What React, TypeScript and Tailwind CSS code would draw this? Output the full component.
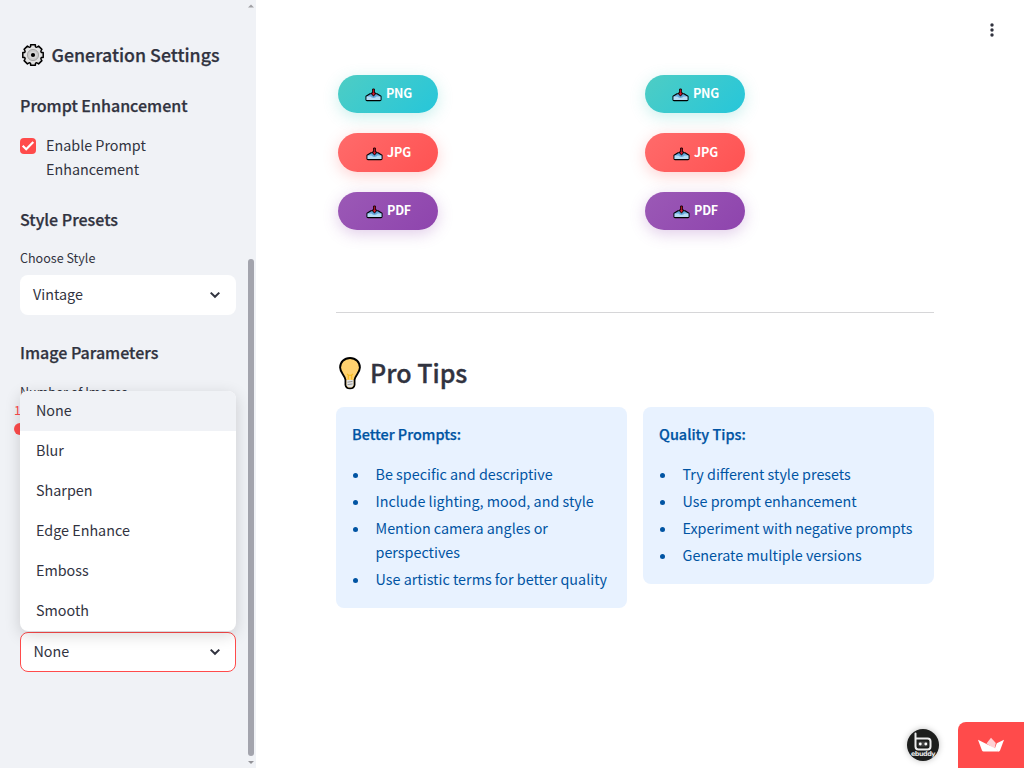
import React from "react";

const filters = ["None", "Blur", "Sharpen", "Edge Enhance", "Emboss", "Smooth"];

function Gear() {
  return (
    <svg width="24" height="24" viewBox="0 0 24 24" className="shrink-0">
      <path
        d="M9.6 1.8 H14.4 V3.6 Q15.2 4.6 16.4 3.9 L17.6 3.1 L20.9 6.4 L20.1 7.6 Q19.4 8.8 20.6 9.6 H22.2 V14.4 H20.6 Q19.4 15.2 20.1 16.4 L20.9 17.6 L17.6 20.9 L16.4 20.1 Q15.2 19.4 14.4 20.6 V22.2 H9.6 V20.6 Q8.8 19.4 7.6 20.1 L6.4 20.9 L3.1 17.6 L3.9 16.4 Q4.6 15.2 3.4 14.4 H1.8 V9.6 H3.4 Q4.6 8.8 3.9 7.6 L3.1 6.4 L6.4 3.1 L7.6 3.9 Q8.8 4.6 9.6 3.6 Z"
        fill="#e2e2e2"
        stroke="#000"
        strokeWidth="1.5"
        strokeLinejoin="round"
      />
      <circle cx="12" cy="12" r="5.6" fill="#c9c9c9" stroke="#9a9a9a" strokeWidth="0.8" />
      <circle cx="12" cy="12" r="3.6" fill="#d8d8d8" />
      <circle cx="12" cy="12" r="2.1" fill="#000" />
    </svg>
  );
}

function Bulb() {
  return (
    <svg width="24" height="34" viewBox="0 0 24 34" className="shrink-0">
      <path
        d="M12 2 C6.2 2 2.1 6.2 2.1 11.6 C2.1 16.8 6.9 19 7.5 24 L7.5 29 C7.8 31.4 9.5 32.4 12 32.4 C14.5 32.4 16.2 31.4 16.5 29 L16.5 24 C17.1 19 21.9 16.8 21.9 11.6 C21.9 6.2 17.8 2 12 2 Z"
        fill="#ffd16f"
        stroke="#000"
        strokeWidth="1.9"
      />
      <path d="M8.6 24 H15.4 V29.5 L13.5 31.2 H10.5 L8.6 29.5 Z" fill="#e4e4e4" />
      <path d="M9.5 26.2 L14.5 25.4 M9.5 28.7 L14.5 27.9" stroke="#777" strokeWidth="0.7" />
      <path d="M10.3 23.5 V19 L9 17.8 M13.7 23.5 V19 L15 17.8 M10.3 19.2 H13.7" stroke="#f5b91c" strokeWidth="1.1" fill="none" />
    </svg>
  );
}

function Inbox() {
  return (
    <svg width="17" height="14" viewBox="0 0 17 14" className="mt-0.5 shrink-0">
      <path d="M1 8.2 L5 5.8 H12 L16 8.2 V11.7 Q16 12.6 15 12.6 H2 Q1 12.6 1 11.7 Z" fill="#63a7dc" stroke="#000" strokeWidth="1.1" strokeLinejoin="round" />
      <path d="M1.6 8.6 H5.5 Q6.3 10 8.5 10 Q10.7 10 11.5 8.6 H15.4 V12 H1.6 Z" fill="#b5dcf3" />
      <path d="M7.6 1 H9.4 V5 H10.9 L8.5 8.2 L6.1 5 H7.6 Z" fill="#d8152a" stroke="#1a0508" strokeWidth="1" />
    </svg>
  );
}

function Chevron() {
  return (
    <svg width="12" height="8" viewBox="0 0 12 8" className="shrink-0">
      <path d="M1.7 1.6 L6 5.8 L10.3 1.6" fill="none" stroke="#31333f" strokeWidth="2" />
    </svg>
  );
}

function Heading({ children }: { children: React.ReactNode }) {
  return <h3 className="h-6 whitespace-nowrap text-[16.03px] leading-[22px] font-medium [-webkit-text-stroke:0.25px_currentColor]">{children}</h3>;
}

function Downloads() {
  return (
    <div className="flex w-[291px] flex-col gap-5 pl-0.5 text-[12.5px] leading-none font-bold text-white">
      <div className="flex h-[38.4px] w-[100px] items-center justify-center gap-1 rounded-full bg-linear-[135deg,#4ecdc4,#26c6da] pl-px tracking-[-0.2px] shadow-[0_4px_15px_rgba(78,205,196,0.3)]">
        <Inbox /><span className="pb-px">PNG</span>
      </div>
      <div className="flex h-[38.4px] w-[100px] items-center justify-center gap-1 rounded-full bg-linear-[135deg,#ff6b6b,#ff5252] pl-px tracking-[-0.2px] shadow-[0_4px_15px_rgba(255,107,107,0.3)]">
        <Inbox /><span className="pb-px">JPG</span>
      </div>
      <div className="flex h-[38.4px] w-[100px] items-center justify-center gap-1 rounded-full bg-linear-[135deg,#9b59b6,#8e44ad] pl-px tracking-[-0.2px] shadow-[0_4px_15px_rgba(155,89,182,0.3)]">
        <Inbox /><span className="pb-px">PDF</span>
      </div>
    </div>
  );
}

function Tips({ title, items }: { title: string; items: string[] }) {
  return (
    <div className="w-[291px] rounded-lg bg-[#e8f2ff] px-4 pt-[15px] pb-[17px] leading-6 text-[#0054a3]">
      <p className="text-[14.45px] font-medium [-webkit-text-stroke:0.25px_currentColor]">{title}</p>
      <ul className="mt-4 flex flex-col gap-[3px]">
        {items.map((item) => (
          <li key={item} className="flex">
            <span className="mt-[11px] mr-[17.5px] ml-px size-[5px] shrink-0 rounded-full bg-[#0054a3]" />
            <span>{item}</span>
          </li>
        ))}
      </ul>
    </div>
  );
}

export default function App() {
  return (
    <div className="flex h-screen w-full overflow-hidden bg-white font-['Noto_Sans_CJK_SC',sans-serif] text-[14.35px] text-[#31333f]">
      <aside className="flex w-64 shrink-0 bg-[#f0f2f6]">
        <div className="flex w-[248px] flex-col pr-3 pl-5">
          <h2 className="mt-[41px] flex h-7 items-center gap-[6.5px] pl-px text-[17.8px] leading-7 font-medium whitespace-nowrap [-webkit-text-stroke:0.25px_currentColor]">
            <Gear /><span className="pb-0.5">Generation Settings</span>
          </h2>
          <div className="mt-[25px]"><Heading>Prompt Enhancement</Heading></div>
          <label className="mt-4 flex leading-6">
            <span className="mt-1 mr-[10px] flex size-4 shrink-0 items-center justify-center rounded bg-[#ff4b4b]">
              <svg width="14" height="12" viewBox="0 0 14 12">
                <path d="M1.7 5.8 L5.2 9.2 L12.3 2" fill="none" stroke="#fff" strokeWidth="2.2" />
              </svg>
            </span>
            <span className="-mt-px mb-px w-[130px]">Enable Prompt Enhancement</span>
          </label>
          <div className="mt-[26px]"><Heading>Style Presets</Heading></div>
          <div className="mt-4 h-5 text-[12.55px] leading-5">Choose Style</div>
          <div className="mt-[7px] flex h-10 items-center justify-between rounded-lg bg-white pr-[15px] pl-[13px]">
            <span className="pb-0.5">Vintage</span><Chevron />
          </div>
          <div className="mt-[26px]"><Heading>Image Parameters</Heading></div>
          <div className="mt-[17px] h-5 text-[12.55px] leading-5">Number of Images</div>
          <div className="-ml-1.5 h-[21px] text-[12.55px] leading-[16px] text-[#ff4b4b]">1</div>
          <div className="-ml-1.5 size-3 rounded-full bg-[#ff4b4b]" />
          <div className="relative mt-[197px]">
            <div className="flex h-10 items-center justify-between rounded-lg border border-[#ff4b4b] bg-white pr-[14px] pl-[12.5px]">
              <span className="pb-0.5">None</span><Chevron />
            </div>
            <ul className="absolute bottom-[41px] left-0 w-full overflow-hidden rounded-lg bg-white shadow-[0_4px_16px_rgba(0,0,0,0.16)]">
              {filters.map((f) => (
                <li key={f} className="flex h-10 items-center pb-0.5 pl-4 first:bg-[#f0f2f6]">{f}</li>
              ))}
            </ul>
          </div>
        </div>
        <div className="flex w-1.5 flex-col items-center">
          <svg width="6" height="4" viewBox="0 0 6 4" className="mt-1"><path d="M0 3.5 L3 0.5 L6 3.5Z" fill="#a0a0a4" /></svg>
          <div className="mt-[251px] h-[497px] w-1.5 rounded-full bg-[#a3a4ad]" />
          <svg width="6" height="4" viewBox="0 0 6 4" className="mt-[5px]"><path d="M0 0 L3 3 L6 0Z" fill="#939398" /></svg>
        </div>
      </aside>
      <main className="relative flex-1 pl-20">
        <div className="flex gap-4 pt-[75px]">
          <Downloads />
          <Downloads />
        </div>
        <div className="mt-[82px] h-px w-[598px] bg-[#d6d6d8]" />
        <h2 className="mt-[42px] flex h-9 items-center gap-2 pl-0.5 text-[25px] leading-9 font-medium [-webkit-text-stroke:0.35px_currentColor]">
          <Bulb /><span className="pb-0.5">Pro Tips</span>
        </h2>
        <div className="mt-4 flex items-start gap-4">
          <Tips title="Better Prompts:" items={["Be specific and descriptive", "Include lighting, mood, and style", "Mention camera angles or perspectives", "Use artistic terms for better quality"]} />
          <Tips title="Quality Tips:" items={["Try different style presets", "Use prompt enhancement", "Experiment with negative prompts", "Generate multiple versions"]} />
        </div>
        <svg width="4" height="14" viewBox="0 0 4 14" className="absolute top-[23px] right-[30px]">
          <circle cx="2" cy="2" r="1.7" fill="#31333f" />
          <circle cx="2" cy="7" r="1.7" fill="#31333f" />
          <circle cx="2" cy="12" r="1.7" fill="#31333f" />
        </svg>
        <div className="absolute right-0 bottom-0 flex items-start">
          <div className="relative mt-[7px] mr-[19px] size-8 overflow-hidden rounded-full bg-[#1d1e1d] shadow-[0_0_6px_rgba(0,0,0,0.25)]">
            <svg width="32" height="32" viewBox="0 0 32 32">
              <path d="M8.5 4.5 V17.5 Q8.5 20.5 11.5 20.5 H20.5 Q23.5 20.5 23.5 17.5 V12.5 Q23.5 9.5 20.5 9.5 H9" fill="none" stroke="#eee" strokeWidth="2" strokeLinecap="round" />
              <rect x="11" y="12.5" width="10" height="5" rx="2" fill="#444" />
              <circle cx="13.3" cy="15" r="1.4" fill="#fff" />
              <circle cx="18.8" cy="15" r="1.4" fill="#fff" />
            </svg>
            <span className="absolute bottom-[3px] left-0 w-full text-center font-['DejaVu_Sans',sans-serif] text-[6.5px] leading-[8px] font-bold tracking-[-0.5px] text-[#e5e5e5]">ebuddy</span>
          </div>
          <div className="flex h-[46px] w-[66px] items-center justify-center rounded-tl-lg bg-[#ff4b4b]">
            <svg width="28" height="16" viewBox="0 0 28 16">
              <path d="M9.5 6.5 L14 0.8 L18.8 6 L17.5 12 Z" fill="#ffd0d4" />
              <path d="M1 2.8 L18.5 11.5 L22 14.5 H6.5 Q5.500 14.5 5 13.5 Z" fill="#fff" />
              <path d="M27 2.8 L19.8 6.3 L17.8 11.5 L21.5 14.5 Q22.5 14.5 23 13.5 Z" fill="#fff" />
            </svg>
          </div>
        </div>
      </main>
    </div>
  );
}
